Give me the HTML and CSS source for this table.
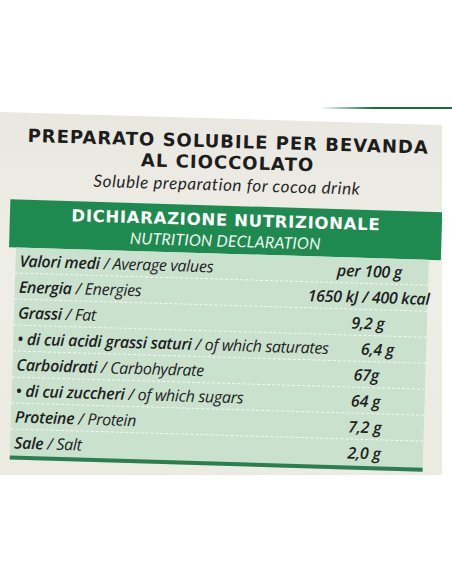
FILE: index.html
```html
<!DOCTYPE html>
<html lang="it">
<head>
    <meta charset="UTF-8">
    <meta name="viewport" content="width=device-width, initial-scale=1.0">
    <title>Dichiarazione nutrizionale</title>
    <link rel="stylesheet" href="styles.css">
</head>

<body>
    <div class="box-edge"></div>

    <section class="card">
        <div class="label">
            <div class="heading">
                <h1 class="title">PREPARATO SOLUBILE PER BEVANDA<br>AL CIOCCOLATO</h1>
                <p class="subtitle">Soluble preparation for cocoa drink</p>
            </div>

            <div class="band">
                <div class="band-it">DICHIARAZIONE NUTRIZIONALE</div>
                <div class="band-en">NUTRITION DECLARATION</div>
            </div>

            <div class="facts">
                <div class="row">
                    <div class="name"><b>Valori medi</b> / Average values</div>
                    <div class="value">per 100 g</div>
                </div>
                <div class="row">
                    <div class="name"><b>Energia</b> / Energies</div>
                    <div class="value">1650 kJ / 400 kcal</div>
                </div>
                <div class="row">
                    <div class="name"><b>Grassi</b> / Fat</div>
                    <div class="value">9,2 g</div>
                </div>
                <div class="row">
                    <div class="name"><b>• di cui acidi grassi saturi</b> / of which saturates</div>
                    <div class="value">6,4 g</div>
                </div>
                <div class="row">
                    <div class="name"><b>Carboidrati</b> / Carbohydrate</div>
                    <div class="value">67g</div>
                </div>
                <div class="row">
                    <div class="name"><b>• di cui zuccheri</b> / of which sugars</div>
                    <div class="value">64 g</div>
                </div>
                <div class="row">
                    <div class="name"><b>Proteine</b> / Protein</div>
                    <div class="value">7,2 g</div>
                </div>
                <div class="row last">
                    <div class="name"><b>Sale</b> / Salt</div>
                    <div class="value">2,0 g</div>
                </div>
            </div>
        </div>
    </section>
</body>
</html>
```

FILE: styles.css
```css
body {
    margin: 0;
    background-color: white;
    font-family: "Open Sans", sans-serif;
    color: #1c211e;
    height: 584px;
    overflow: hidden;
}

/* green edge of the other face of the box */
.box-edge {
    margin-top: 107px;
    margin-left: 320px;
    height: 2px;
    background: linear-gradient(to right, rgba(30, 110, 62, 0), #1d6f40 40%, #1a6a3c);
}

.card {
    margin-top: 3px;
    width: 442px;
    height: 363px;
    background: linear-gradient(to bottom, #e8e8e1, #eeeee7 40%, #ecebe2);
    clip-path: polygon(0 0, 100% 13px, 100% 100%, 0 100%);
}

.label {
    transform: rotate(1.7deg);
    transform-origin: 0 0;
    padding-top: 12px;
}

.heading {
    margin-left: 13px;
    width: 432px;
    text-align: center;
}

.title {
    margin: 0;
    font-family: "DejaVu Sans", sans-serif;
    font-weight: 700;
    font-size: 18px;
    line-height: 21px;
    color: #1d1d1b;
    letter-spacing: 1px;
}

.subtitle {
    margin: 1px 0 0;
    font-family: Lato, sans-serif;
    font-style: italic;
    font-size: 17px;
    line-height: 22px;
    color: #262624;
    letter-spacing: 0.6px;
}

.band {
    margin: 10px 0 0 13px;
    width: 432px;
    height: 48px;
    background-color: #1f8a4f;
    color: white;
    text-align: center;
    padding-top: 5px;
    box-sizing: border-box;
}

.band-it {
    font-family: "DejaVu Sans", sans-serif;
    font-weight: 700;
    font-size: 16.5px;
    line-height: 20px;
    letter-spacing: 0.7px;
}

.band-en {
    font-family: Lato, sans-serif;
    font-style: italic;
    font-size: 16px;
    line-height: 20px;
    letter-spacing: 0.2px;
    color: #eef6f0;
}

.facts {
    margin-left: 20px;
    width: 413px;
    background-color: #c9e1cd;
    border-bottom: 4px solid #2a7e4f;
    font-style: italic;
    font-size: 16px;
    letter-spacing: -0.3px;
}

.row {
    display: flex;
    height: 26px;
    line-height: 26px;
    border-bottom: 1px dashed rgba(255, 255, 255, 0.8);
    box-sizing: border-box;
}

.row.last {
    border-bottom: none;
}

.name {
    flex: 1;
    padding-left: 4px;
    white-space: nowrap;
}

.name b {
    font-weight: 600;
}

.value {
    width: 118px;
    display: flex;
    justify-content: center;
    white-space: nowrap;
    font-weight: 600;
}
```
